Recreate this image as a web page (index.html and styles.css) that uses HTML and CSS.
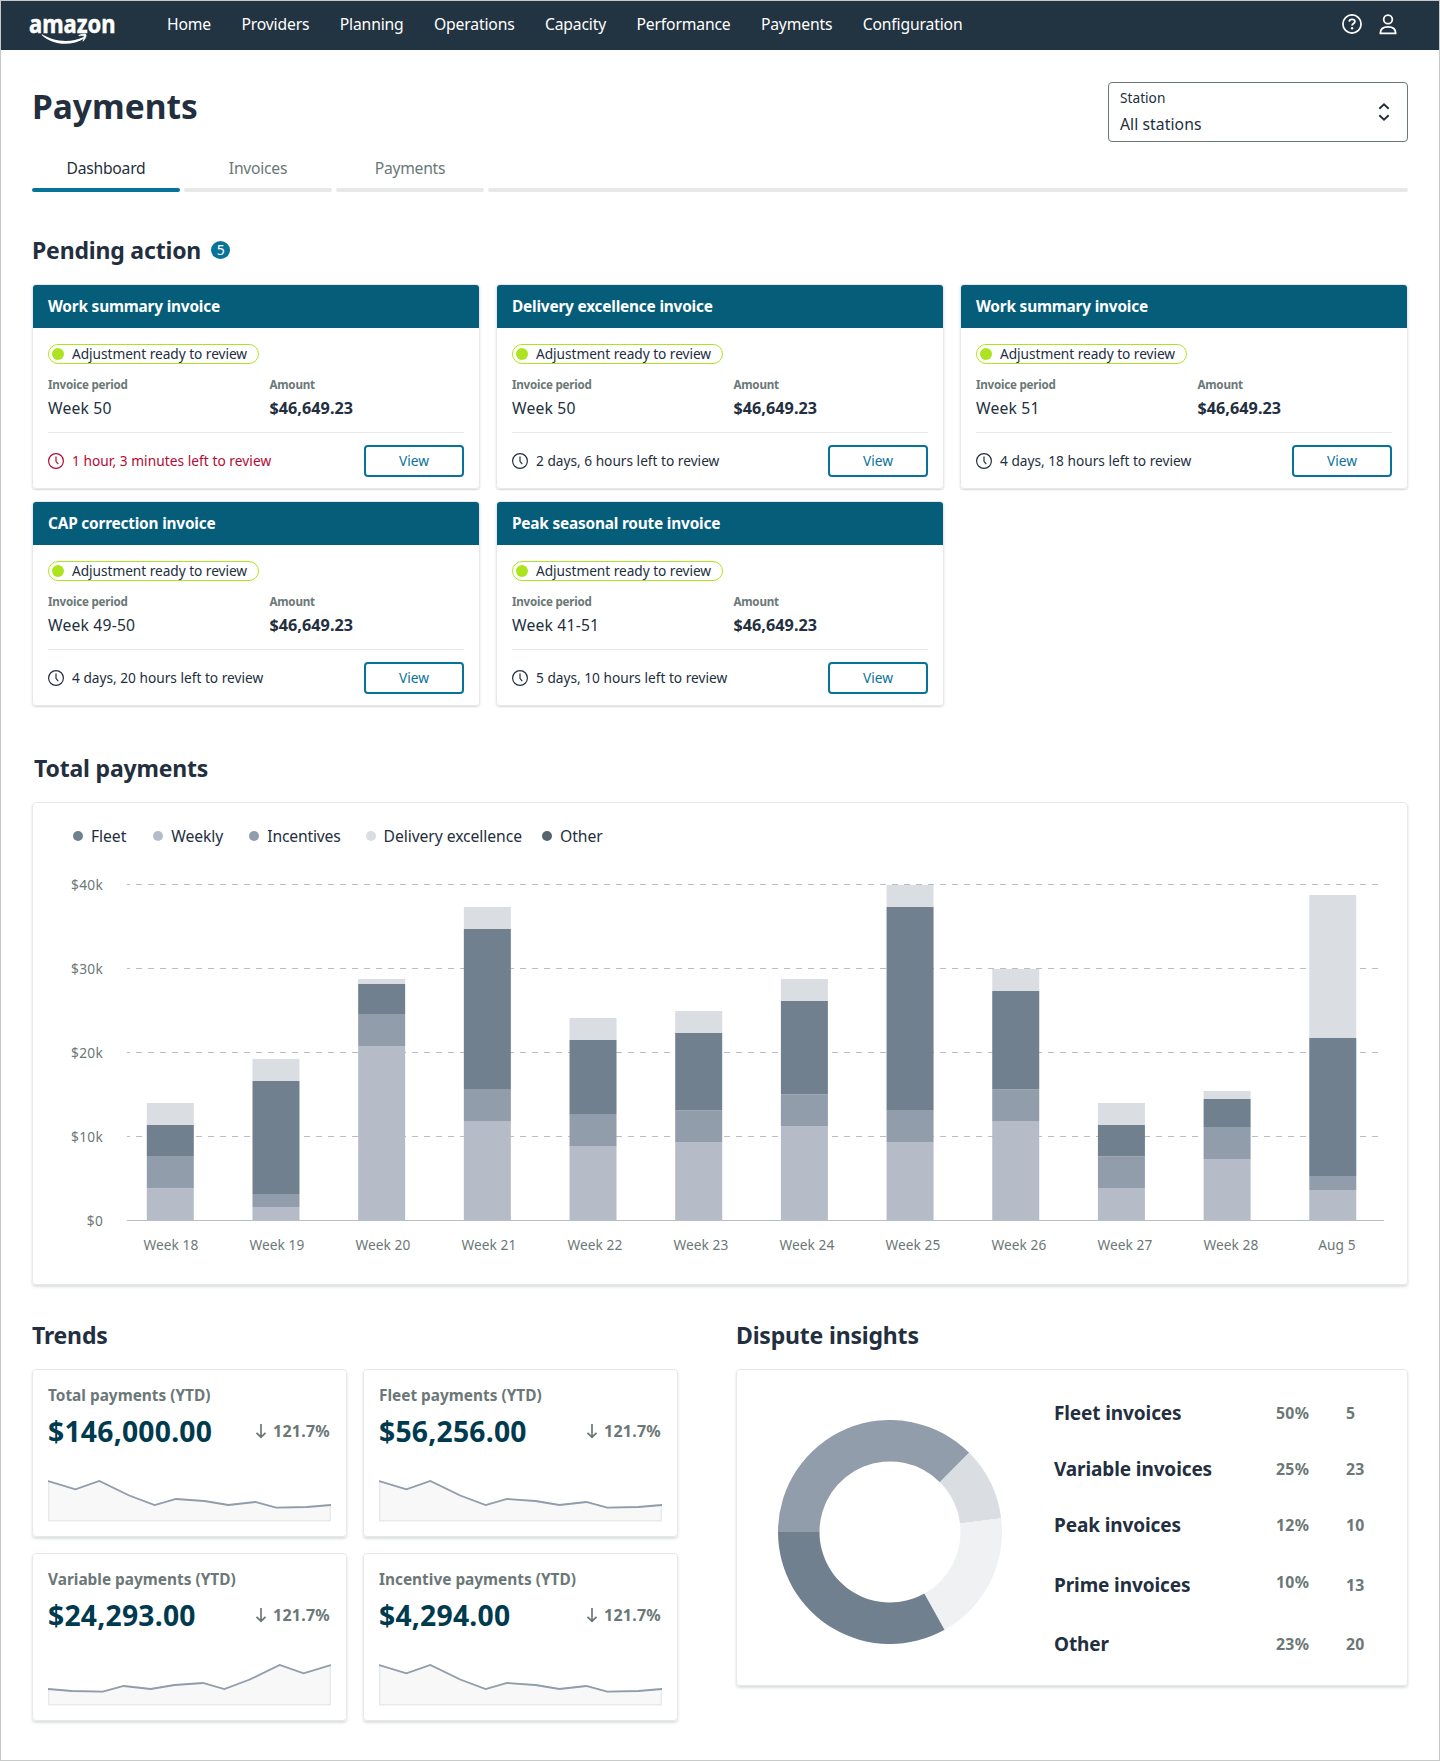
FILE: index.html
```html
<!DOCTYPE html>
<html lang="en">
<head>
    <meta charset="UTF-8">
    <meta name="viewport" content="width=device-width, initial-scale=1.0">
    <title>Payments</title>
    <link rel="stylesheet" href="styles.css">
</head>
<body>
<!-- shared icons -->
<svg width="0" height="0" class="defs">
    <symbol id="clock" viewBox="0 0 16 16">
        <circle cx="8" cy="8" r="7.4" fill="none" stroke="currentColor" stroke-width="1.2"/>
        <path d="M8 3.5V8.4L10.2 11.2" fill="none" stroke="currentColor" stroke-width="1.2"/>
    </symbol>
    <symbol id="arrow-down" viewBox="0 0 12 16">
        <path d="M6 1V14M1.5 9.8L6 14.2L10.5 9.8" fill="none" stroke="currentColor" stroke-width="1.7"/>
    </symbol>
    <symbol id="spark" viewBox="0 0 284 44">
        <path d="M0.7 3L27.5 11.3L51.5 3L81.5 17.5L107 27L128.5 21L157 23L181 27L208 24L229 29.7L260 29L283.3 27V42.8H0.7Z" fill="#f8f8f9" stroke="#e7eaed" stroke-width="1.5"/>
        <path d="M0 3L27.5 11.3L51.5 3L81.5 17.5L107 27L128.5 21L157 23L181 27L208 24L229 29.7L260 29L284 27" fill="none" stroke="#929dab" stroke-width="1.8"/>
    </symbol>
</svg>

<div class="page">
    <header class="topbar">
        <svg class="logo" width="86" height="30" viewBox="0 0 86 30">
            <text x="-1" y="18.5" textLength="86.5" lengthAdjust="spacingAndGlyphs">amazon</text>
            <path d="M12 20.2C24 27.5 40 29.5 53.5 22.9L54.6 24.2C41 32.8 22 31 11.6 20.9Z" fill="#fff"/>
            <path d="M48.8 21.4C52 19.8 55.5 19.8 56 20.6C56.6 22 55.2 25.2 53 27.2C53.6 25 54.6 22.8 54 22C53.2 21.2 51 21.6 48.8 21.8Z" fill="#fff" stroke="#fff" stroke-width="0.7"/>
        </svg>
        <nav class="nav">
            <a>Home</a>
            <a>Providers</a>
            <a>Planning</a>
            <a>Operations</a>
            <a>Capacity</a>
            <a>Performance</a>
            <a>Payments</a>
            <a>Configuration</a>
        </nav>
        <div class="top-icons">
            <svg width="20" height="20" viewBox="0 0 20 20" fill="none" stroke="#fff">
                <circle cx="10" cy="10" r="9.1" stroke-width="1.7"/>
                <path d="M7.2 7.6C7.3 6 8.5 5.4 10 5.4C11.7 5.4 12.9 6.2 12.9 7.7C12.9 9.6 10.1 9.4 10.1 11.6" stroke-width="1.8"/>
                <circle cx="10.1" cy="14.2" r="1.2" fill="#fff" stroke="none"/>
            </svg>
            <svg width="18" height="21" viewBox="0 0 18 21" fill="none" stroke="#fff" stroke-width="1.8">
                <circle cx="9" cy="5.4" r="4.3"/>
                <path d="M1.3 19.4C1.3 15 3.6 12.9 9 12.9C14.4 12.9 16.7 15 16.7 19.4Z" stroke-linejoin="round"/>
            </svg>
        </div>
    </header>

    <main class="content">
        <div class="title-row">
            <h1>Payments</h1>
            <div class="station">
                <div>
                    <div class="station-label">Station</div>
                    <div class="station-value">All stations</div>
                </div>
                <svg width="12" height="20" viewBox="0 0 12 20" fill="none" stroke="#232f3e" stroke-width="2">
                    <path d="M1.3 6.7L6 2.3L10.7 6.7M1.3 13.3L6 17.7L10.7 13.3"/>
                </svg>
            </div>
        </div>

        <div class="tabs">
            <div class="tab active">Dashboard</div>
            <div class="tab">Invoices</div>
            <div class="tab">Payments</div>
            <div class="tab rest"></div>
        </div>

        <h2 class="pending-title">Pending action <span class="badge">5</span></h2>
        <div class="invoices">
            <div class="invoice">
                <h3>Work summary invoice</h3>
                <div class="invoice-body">
                    <div class="pill">Adjustment ready to review</div>
                    <div class="facts">
                        <div><div class="label">Invoice period</div><div class="value">Week 50</div></div>
                        <div><div class="label">Amount</div><div class="value amount">$46,649.23</div></div>
                    </div>
                    <div class="invoice-foot urgent">
                        <svg width="16" height="16"><use href="#clock"/></svg>
                        <span>1 hour, 3 minutes left to review</span>
                        <button>View</button>
                    </div>
                </div>
            </div>
            <div class="invoice">
                <h3>Delivery excellence invoice</h3>
                <div class="invoice-body">
                    <div class="pill">Adjustment ready to review</div>
                    <div class="facts">
                        <div><div class="label">Invoice period</div><div class="value">Week 50</div></div>
                        <div><div class="label">Amount</div><div class="value amount">$46,649.23</div></div>
                    </div>
                    <div class="invoice-foot">
                        <svg width="16" height="16"><use href="#clock"/></svg>
                        <span>2 days, 6 hours left to review</span>
                        <button>View</button>
                    </div>
                </div>
            </div>
            <div class="invoice">
                <h3>Work summary invoice</h3>
                <div class="invoice-body">
                    <div class="pill">Adjustment ready to review</div>
                    <div class="facts">
                        <div><div class="label">Invoice period</div><div class="value">Week 51</div></div>
                        <div><div class="label">Amount</div><div class="value amount">$46,649.23</div></div>
                    </div>
                    <div class="invoice-foot">
                        <svg width="16" height="16"><use href="#clock"/></svg>
                        <span>4 days, 18 hours left to review</span>
                        <button>View</button>
                    </div>
                </div>
            </div>
            <div class="invoice">
                <h3>CAP correction invoice</h3>
                <div class="invoice-body">
                    <div class="pill">Adjustment ready to review</div>
                    <div class="facts">
                        <div><div class="label">Invoice period</div><div class="value">Week 49-50</div></div>
                        <div><div class="label">Amount</div><div class="value amount">$46,649.23</div></div>
                    </div>
                    <div class="invoice-foot">
                        <svg width="16" height="16"><use href="#clock"/></svg>
                        <span>4 days, 20 hours left to review</span>
                        <button>View</button>
                    </div>
                </div>
            </div>
            <div class="invoice">
                <h3>Peak seasonal route invoice</h3>
                <div class="invoice-body">
                    <div class="pill">Adjustment ready to review</div>
                    <div class="facts">
                        <div><div class="label">Invoice period</div><div class="value">Week 41-51</div></div>
                        <div><div class="label">Amount</div><div class="value amount">$46,649.23</div></div>
                    </div>
                    <div class="invoice-foot">
                        <svg width="16" height="16"><use href="#clock"/></svg>
                        <span>5 days, 10 hours left to review</span>
                        <button>View</button>
                    </div>
                </div>
            </div>
        </div>

        <h2 class="total-title">Total payments</h2>
        <div class="panel chart-panel">
            <div class="legend">
                <span class="fleet">Fleet</span>
                <span class="weekly">Weekly</span>
                <span class="incentives">Incentives</span>
                <span class="delivery">Delivery excellence</span>
                <span class="other">Other</span>
            </div>
            <svg id="chart" class="chart" width="1340" height="400"></svg>
        </div>

        <div class="bottom">
            <section>
                <h2>Trends</h2>
                <div class="trends">
                    <div class="panel trend">
                        <div class="trend-name">Total payments (YTD)</div>
                        <div class="trend-row">
                            <span class="trend-value">$146,000.00</span>
                            <span class="trend-change"><svg width="12" height="16"><use href="#arrow-down"/></svg>121.7%</span>
                        </div>
                        <svg class="spark" width="283" height="44" viewBox="0 0 284 44" preserveAspectRatio="none"><use href="#spark" width="284" height="44"/></svg>
                    </div>
                    <div class="panel trend">
                        <div class="trend-name">Fleet payments (YTD)</div>
                        <div class="trend-row">
                            <span class="trend-value">$56,256.00</span>
                            <span class="trend-change"><svg width="12" height="16"><use href="#arrow-down"/></svg>121.7%</span>
                        </div>
                        <svg class="spark" width="283" height="44" viewBox="0 0 284 44" preserveAspectRatio="none"><use href="#spark" width="284" height="44"/></svg>
                    </div>
                    <div class="panel trend">
                        <div class="trend-name">Variable payments (YTD)</div>
                        <div class="trend-row">
                            <span class="trend-value">$24,293.00</span>
                            <span class="trend-change"><svg width="12" height="16"><use href="#arrow-down"/></svg>121.7%</span>
                        </div>
                        <svg class="spark rising" width="283" height="44" viewBox="0 0 284 44" preserveAspectRatio="none"><use href="#spark" width="284" height="44"/></svg>
                    </div>
                    <div class="panel trend">
                        <div class="trend-name">Incentive payments (YTD)</div>
                        <div class="trend-row">
                            <span class="trend-value">$4,294.00</span>
                            <span class="trend-change"><svg width="12" height="16"><use href="#arrow-down"/></svg>121.7%</span>
                        </div>
                        <svg class="spark" width="283" height="44" viewBox="0 0 284 44" preserveAspectRatio="none"><use href="#spark" width="284" height="44"/></svg>
                    </div>
                </div>
            </section>
            <section>
                <h2>Dispute insights</h2>
                <div class="panel dispute">
                    <svg class="donut" width="224" height="224" viewBox="-112 -112 224 224">
                        <path fill="#929dab" d="M-112 0A112 112 0 0 1 79.2 -79.2L49.85 -49.85A70.5 70.5 0 0 0 -70.5 0Z"/>
                        <path fill="#dadde2" d="M79.2 -79.2A112 112 0 0 1 111.16 -13.65L69.97 -8.6A70.5 70.5 0 0 0 49.85 -49.85Z"/>
                        <path fill="#eff1f3" d="M111.16 -13.65A112 112 0 0 1 54.5 97.85L34.3 61.6A70.5 70.5 0 0 0 69.97 -8.6Z"/>
                        <path fill="#70808f" d="M54.5 97.85A112 112 0 0 1 -112 0H-70.5A70.5 70.5 0 0 0 34.3 61.6Z"/>
                    </svg>
                    <div class="dispute-list">
                        <div class="dispute-row"><span class="name">Fleet invoices</span><span>50%</span><span>5</span></div>
                        <div class="dispute-row"><span class="name">Variable invoices</span><span>25%</span><span>23</span></div>
                        <div class="dispute-row"><span class="name">Peak invoices</span><span>12%</span><span>10</span></div>
                        <div class="dispute-row prime"><span class="name">Prime invoices</span><span class="raised">10%</span><span>13</span></div>
                        <div class="dispute-row last"><span class="name">Other</span><span>23%</span><span>20</span></div>
                    </div>
                </div>
            </section>
        </div>
    </main>
</div>

<script>
    // Segment heights from the bottom up: weekly, incentives, fleet, delivery excellence
    // 84 units of height = $10k
    const bars = [
        { label: "Week 18", parts: [31.7, 32.3, 31, 22] },
        { label: "Week 19", parts: [13, 13, 113, 22] },
        { label: "Week 20", parts: [174, 32, 30, 5] },
        { label: "Week 21", parts: [99, 32, 160, 22] },
        { label: "Week 22", parts: [74, 32, 74, 22] },
        { label: "Week 23", parts: [77.5, 32, 77.5, 22] },
        { label: "Week 24", parts: [93.5, 32, 93.5, 22] },
        { label: "Week 25", parts: [78, 32, 203, 22] },
        { label: "Week 26", parts: [98.5, 32, 98.5, 22] },
        { label: "Week 27", parts: [31.5, 32, 31.5, 22] },
        { label: "Week 28", parts: [61, 32, 28, 8] },
        { label: "Aug 5", parts: [30, 14, 138, 143] }
    ];
    const colors = ["#b6bcc7", "#929dab", "#70808f", "#dadde2"];
    const ticks = ["$40k", "$30k", "$20k", "$10k", "$0"];
    const bottom = 360;
    let out = "";

    // Grid lines and y axis labels
    ticks.forEach((tick, i) => {
        const y = 24.5 + i * 84;
        const dash = i < 4 ? 'stroke-dasharray="6 6" stroke-dashoffset="3"' : "";
        out += `<line x1="64" x2="1321" y1="${y}" y2="${y}" stroke="#b9bfc0" ${dash}/>`;
        out += `<text class="tick" x="40" y="${y + 5.5}" text-anchor="end">${tick}</text>`;
    });

    // Stacked bars and x axis labels
    bars.forEach((bar, i) => {
        let y = bottom;
        bar.parts.forEach((h, p) => {
            y -= h;
            out += `<rect x="${83.8 + i * 105.68}" y="${y}" width="47" height="${h}" fill="${colors[p]}"/>`;
        });
        out += `<text class="tick week" x="${107.9 + i * 106}" y="390" text-anchor="middle">${bar.label}</text>`;
    });

    document.getElementById("chart").innerHTML = out;
</script>
</body>
</html>
```
FILE: styles.css
```css
* {
    box-sizing: border-box;
}
body {
    margin: 0;
    background-color: #ffffff;
    font-family: "Noto Sans", "Open Sans", sans-serif;
    font-size: 15.7px;
    line-height: 24px;
    color: #232f3e;
}
svg {
    display: block;
    flex: none;
}
.defs {
    position: absolute;
}
.page {
    height: 1761px;
    border: 1px solid #c8c9c9;
}
h1, h2, h3 {
    margin: 0;
}
h1 {
    font-size: 33.5px;
    line-height: 48px;
}
h2 {
    font-size: 23px;
    line-height: 32px;
    letter-spacing: -0.008em;
}

/* top bar */
.topbar {
    display: flex;
    height: 49px;
    padding: 11px 31px 0 29px;
    background-color: #223341;
    color: #ffffff;
}
.logo {
    margin-top: 2px;
    overflow: visible;
}
.logo text {
    font-size: 25px;
    font-weight: bold;
    fill: #ffffff;
    stroke: #ffffff;
    stroke-width: 0.5px;
}
.nav {
    display: flex;
    gap: 30.4px;
    margin-left: 51px;
    letter-spacing: -0.01em;
}
.top-icons {
    display: flex;
    gap: 17px;
    margin-left: auto;
    margin-right: 10.6px;
    padding-top: 2px;
}

.content {
    padding: 32px 31px 0;
}
.title-row {
    display: flex;
    justify-content: space-between;
    height: 60px;
}
.station {
    display: flex;
    justify-content: space-between;
    align-items: center;
    width: 300px;
    padding: 0 17px 0 11px;
    border: 1px solid #6b7877;
    border-radius: 4px;
}
.station-label {
    font-size: 13.7px;
    line-height: 22px;
    margin-top: -1px;
}
.station-value {
    margin-top: 3px;
    letter-spacing: 0.005em;
}

/* tabs */
.tabs {
    display: flex;
    gap: 4px;
    margin-top: 14px;
    letter-spacing: -0.017em;
}
.tab {
    width: 148px;
    height: 36px;
    text-align: center;
    color: #6b7877;
    position: relative;
}
.tab::after {
    content: "";
    position: absolute;
    left: 0;
    right: 0;
    bottom: 0;
    height: 4px;
    border-radius: 2px;
    background-color: #e7e9e9;
}
.tab.active {
    color: #232f3e;
}
.tab.active::after {
    background-color: #077398;
}
.tab.rest {
    flex: 1;
}

/* pending invoices */
.pending-title {
    display: flex;
    align-items: center;
    margin-top: 42px;
}
.badge {
    width: 19px;
    height: 18px;
    margin: 0 0 1px 10px;
    border-radius: 50%;
    background-color: #077398;
    color: #ffffff;
    font-size: 14px;
    font-weight: normal;
    line-height: 18px;
    text-align: center;
}
.invoices {
    display: grid;
    grid-template-columns: repeat(3, 448px);
    gap: 12px 16px;
    margin-top: 18px;
}
.invoice {
    height: 205px;
    border: 1px solid #e7e9e9;
    border-radius: 4px;
    box-shadow: 0 1px 2px #d5d9d9;
    overflow: hidden;
}
.invoice h3 {
    height: 43px;
    padding-left: 15px;
    background-color: #055d7a;
    color: #ffffff;
    font-size: 15.4px;
    line-height: 43px;
    letter-spacing: -0.013em;
}
.invoice-body {
    padding: 16px 15px 0;
}
.pill {
    display: flex;
    align-items: center;
    width: 211px;
    height: 20px;
    padding-left: 3px;
    border: 1px solid #ace520;
    border-radius: 10px;
    font-size: 13.7px;
    line-height: 18px;
    letter-spacing: -0.003em;
    white-space: nowrap;
}
.pill::before {
    content: "";
    width: 12px;
    height: 12px;
    margin-right: 8px;
    border-radius: 50%;
    background-color: #ace520;
}
.facts {
    display: grid;
    grid-template-columns: 221.5px 1fr;
    height: 69px;
    padding-top: 13px;
    border-bottom: 1px solid #e7e9e9;
}
.label {
    font-size: 11.6px;
    font-weight: bold;
    line-height: 16px;
    letter-spacing: -0.02em;
    color: #6b7877;
}
.value {
    margin-top: 3px;
    letter-spacing: 0.012em;
}
.amount {
    font-size: 16.2px;
    font-weight: bold;
    letter-spacing: 0.002em;
}
.invoice-foot {
    display: flex;
    align-items: center;
    padding-top: 12px;
    font-size: 13.7px;
}
.invoice-foot span {
    margin-left: 8px;
}
.urgent span {
    letter-spacing: 0.004em;
}
.urgent svg, .urgent span {
    color: #b30a34;
}
.invoice-foot button {
    width: 100px;
    height: 32px;
    margin-left: auto;
    padding: 0 0 1px;
    border: 2px solid #077398;
    border-radius: 4px;
    background-color: #ffffff;
    color: #077398;
    font-family: inherit;
    font-size: 13.7px;
}

/* chart */
.panel {
    border: 1px solid #e7e9e9;
    border-radius: 4px;
    box-shadow: 0 2px 3px #dcdfdf;
}
.total-title {
    margin-top: 46px;
    padding-left: 2px;
}
.chart-panel {
    height: 483px;
    margin-top: 18px;
    padding: 21px 0 0 30px;
}
.legend {
    display: flex;
    gap: 25px;
    padding-left: 10px;
    letter-spacing: -0.004em;
}
.legend span {
    display: flex;
    align-items: center;
}
.legend span::before {
    content: "";
    width: 10px;
    height: 10px;
    margin-right: 8px;
    border-radius: 50%;
    background-color: #70808f;
}
.legend .weekly {
    margin-left: 2px;
}
.legend .incentives {
    margin-left: 1px;
    letter-spacing: -0.012em;
}
.legend .weekly::before {
    background-color: #b6bcc7;
}
.legend .incentives::before {
    background-color: #929dab;
}
.legend .delivery::before {
    background-color: #dadde2;
}
.legend .other::before {
    background-color: #56646f;
}
.legend .other {
    margin-left: -5px;
}
.chart {
    margin-top: 12px;
}
.tick {
    font-size: 13.7px;
    letter-spacing: 0.02em;
    fill: #6b7877;
}
.week {
    letter-spacing: 0.005em;
}

/* trends and disputes */
.bottom {
    display: grid;
    grid-template-columns: 646px 672px;
    gap: 58px;
    margin-top: 34px;
}
.trends {
    display: grid;
    grid-template-columns: 315px 315px;
    gap: 16px;
    margin-top: 18px;
}
.trend {
    height: 168px;
    padding: 14px 15px 0;
}
.trend-name {
    font-size: 15.4px;
    font-weight: bold;
    color: #6b7877;
}
.trend-row {
    display: flex;
    justify-content: space-between;
    height: 36px;
    margin-top: 5px;
    padding-right: 1px;
}
.trend-value {
    font-size: 28.3px;
    font-weight: bold;
    line-height: 36px;
    letter-spacing: 0.008em;
    color: #003a4f;
}
.trend-change {
    display: flex;
    align-items: center;
    gap: 6px;
    font-size: 16px;
    font-weight: bold;
    line-height: 36px;
    letter-spacing: 0.015em;
    color: #6b7877;
}
.spark {
    margin-top: 29px;
}
.rising {
    transform: scaleX(-1);
}
.dispute {
    display: flex;
    height: 317px;
    margin-top: 18px;
}
.donut {
    margin: 50px 0 0 41px;
}
.dispute-list {
    margin: 31px 0 0 52px;
}
.dispute-row {
    display: grid;
    grid-template-columns: 222px 70px 60px;
    height: 56px;
    font-size: 15.8px;
    font-weight: bold;
    letter-spacing: 0.02em;
    color: #6b7877;
}
.dispute-row .name {
    font-size: 19px;
    font-weight: bold;
    letter-spacing: -0.006em;
    color: #232f3e;
}
.prime {
    margin-top: 4px;
}
.last {
    margin-top: 3px;
}
.raised {
    margin-top: -3px;
}
```
